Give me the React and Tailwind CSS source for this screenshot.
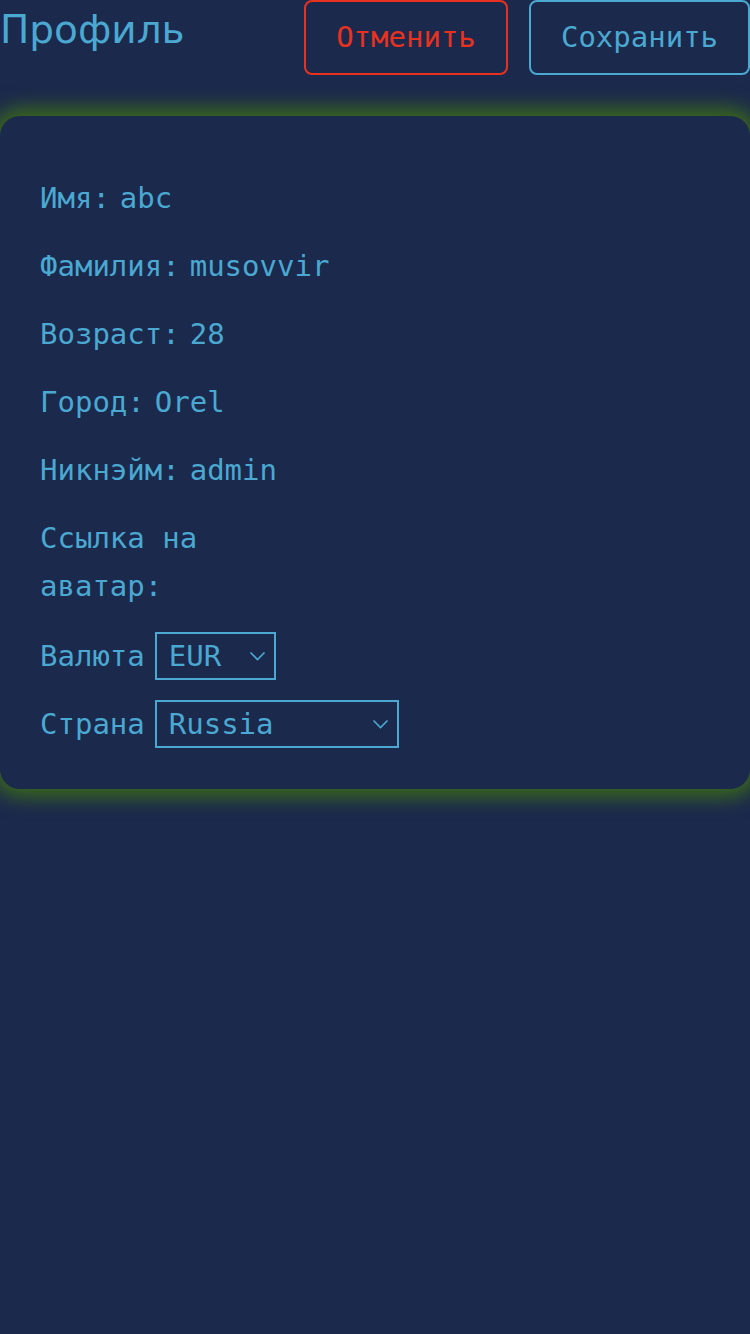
import React from 'react';

const mono = { fontFamily: '"DejaVu Sans Mono", monospace' };

function Chevron() {
  return (
    <svg width="17" height="10" viewBox="0 0 17 10" fill="none" stroke="currentColor" strokeWidth="1.6">
      <path d="M1.5 1.5 L8.5 8.5 L15.5 1.5" />
    </svg>
  );
}

function Field({ label, value }) {
  return (
    <div className="flex items-start gap-[10px]">
      <span className="max-w-[190px]">{label}</span>
      {value && <span>{value}</span>}
    </div>
  );
}

function SelectBox({ label, value, width, className = '' }) {
  return (
    <div className={`flex items-center gap-[10px] ${className}`}>
      <span>{label}</span>
      <div
        className="flex h-[48px] items-center justify-between border-2 border-[#4aa8d1] pl-[12px] pr-[8px]"
        style={{ width }}
      >
        <span>{value}</span>
        <Chevron />
      </div>
    </div>
  );
}

export default function App() {
  const fields = [
    ['Имя:', 'abc'],
    ['Фамилия:', 'musovvir'],
    ['Возраст:', '28'],
    ['Город:', 'Orel'],
    ['Никнэйм:', 'admin'],
    ['Ссылка на аватар:', ''],
  ];

  return (
    <div className="min-h-[1334px] bg-[#1b294d] text-[#4aa8d1]">
      {/* шапка */}
      <div className="flex items-start justify-between">
        <h1 className="pt-[2px] text-[39px] leading-[56px]" style={{ fontFamily: '"DejaVu Sans", sans-serif' }}>
          Профиль
        </h1>
        <div className="flex gap-[21px] text-[29px]" style={mono}>
          <button className="h-[75px] w-[204px] rounded-[8px] border-2 border-[#e8321f] text-[#e8321f]">
            Отменить
          </button>
          <button className="h-[75px] w-[221px] rounded-[8px] border-2 border-[#4aa8d1]">
            Сохранить
          </button>
        </div>
      </div>

      {/* карточка профиля */}
      <div
        className="mt-[41px] flex flex-col gap-[20px] rounded-[20px] bg-[#1b294d] px-[40px] pt-[58px] pb-[41px] text-[29px] leading-[48px] shadow-[0_0_20px_8px_#3c6a1a]"
        style={mono}
      >
        {fields.map(([label, value]) => (
          <Field key={label} label={label} value={value} />
        ))}
        <SelectBox label="Валюта" value="EUR" width={121} className="mt-[2px]" />
        <SelectBox label="Страна" value="Russia" width={244} />
      </div>
    </div>
  );
}
